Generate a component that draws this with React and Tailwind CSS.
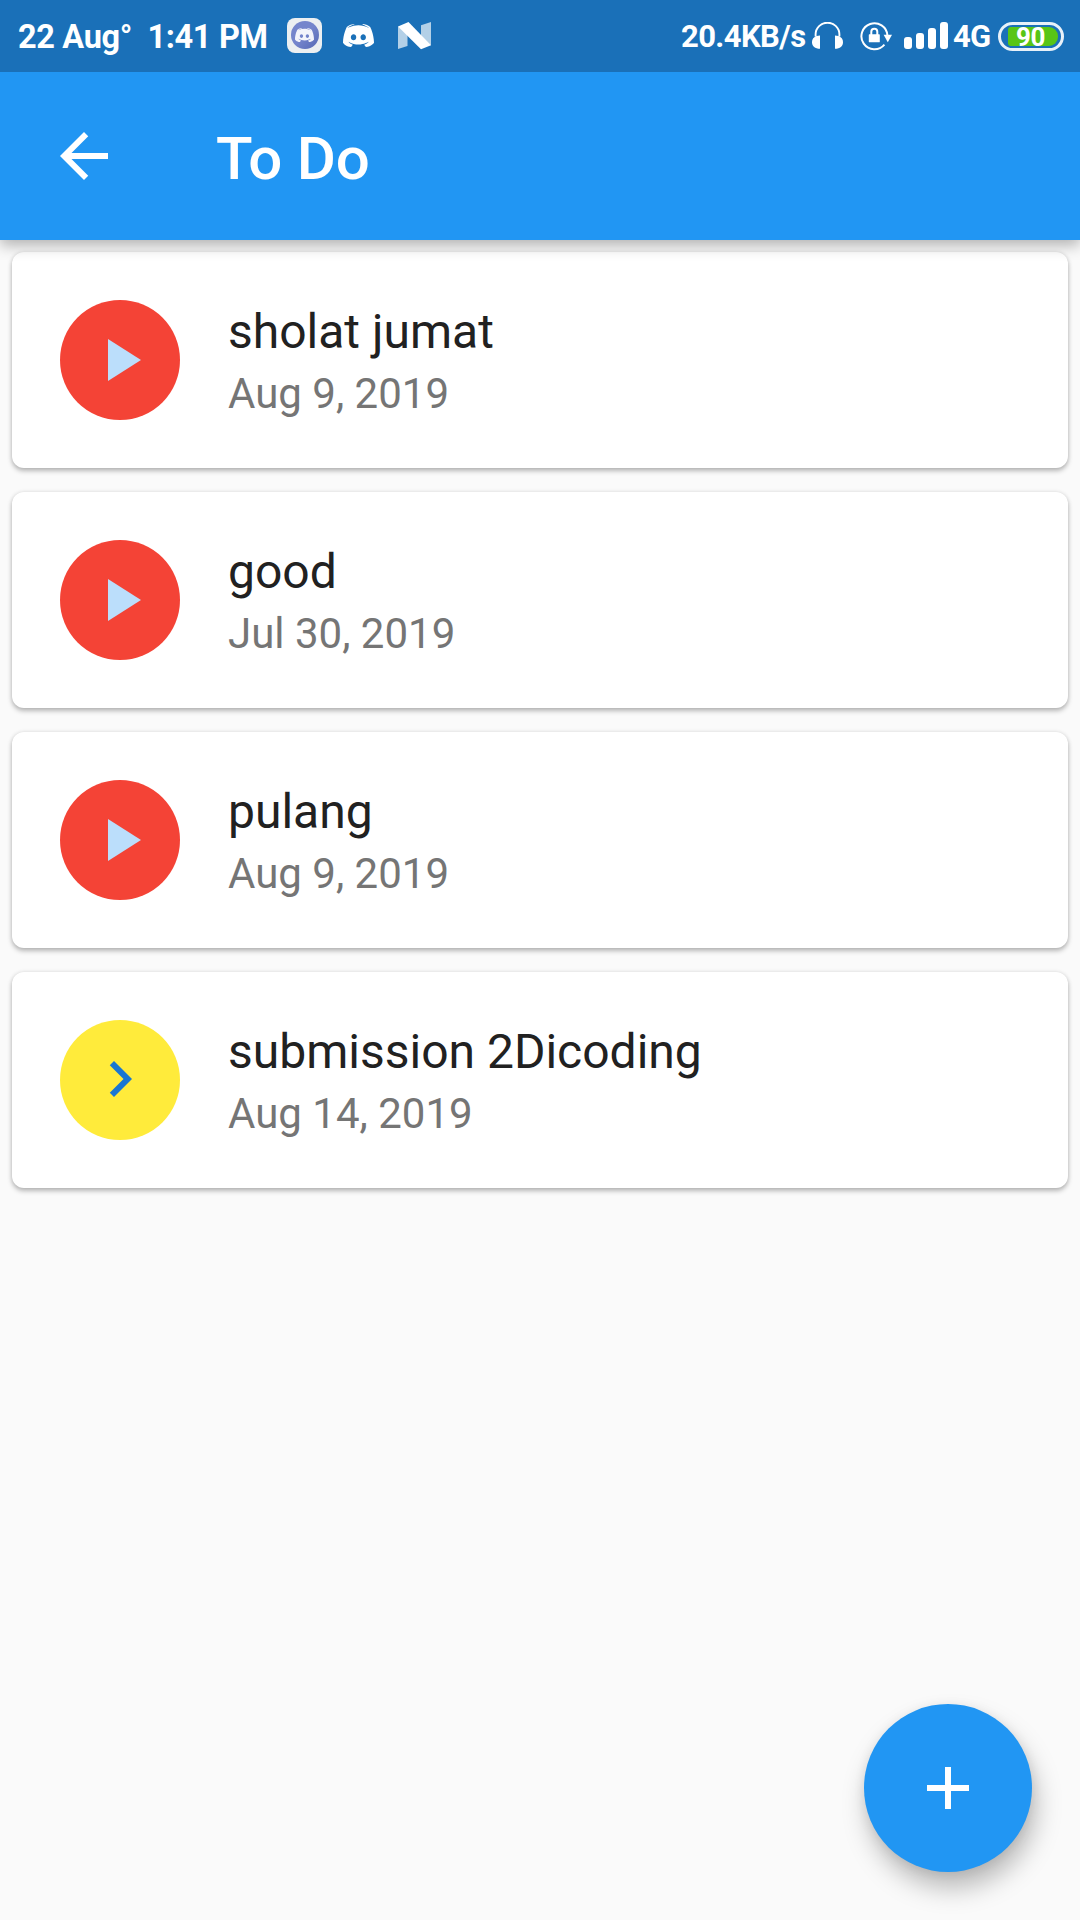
import React from 'react';

const TASKS = [
  { title: 'sholat jumat', date: 'Aug 9, 2019', state: 'todo' },
  { title: 'good', date: 'Jul 30, 2019', state: 'todo' },
  { title: 'pulang', date: 'Aug 9, 2019', state: 'todo' },
  { title: 'submission 2Dicoding', date: 'Aug 14, 2019', state: 'next' },
];

const DISCORD_MARK =
  'M297.216 243.2c0 15.616-11.52 28.416-26.112 28.416-14.336 0-26.112-12.8-26.112-28.416s11.52-28.416 26.112-28.416c14.592 0 26.112 12.8 26.112 28.416zm-119.552-28.416c-14.592 0-26.112 12.8-26.112 28.416s11.776 28.416 26.112 28.416c14.592 0 26.112-12.8 26.112-28.416.256-15.616-11.52-28.416-26.112-28.416zM375.04 295.424c0-82.432-36.864-149.248-36.864-149.248-36.864-27.648-71.936-26.88-71.936-26.88l-3.584 4.096c43.52 13.312 63.744 32.512 63.744 32.512-60.811-33.329-132.244-33.335-191.232-7.424-9.472 4.352-15.104 7.424-15.104 7.424s21.248-20.224 67.328-33.536l-2.56-3.072s-35.072-.768-71.936 26.88c0 0-36.864 66.816-36.864 149.248 0 0 21.504 37.12 78.08 38.912 0 0 9.472-11.52 17.152-21.248-32.512-9.728-44.8-30.208-44.8-30.208 3.766 2.636 9.976 6.053 10.496 6.4 43.21 24.198 104.588 32.126 159.744 8.96 8.96-3.328 18.944-8.192 29.44-15.104 0 0-12.8 20.992-46.336 30.464 7.68 9.728 16.896 20.736 16.896 20.736 56.576-1.792 78.336-38.912 78.336-38.912z';

function DiscordMark({ className }) {
  return (
    <svg viewBox="76 119 299 216" className={className} fill="currentColor" fillRule="evenodd" preserveAspectRatio="none">
      <path d={DISCORD_MARK} />
    </svg>
  );
}

function MaterialIcon({ d, className }) {
  return (
    <svg viewBox="0 0 24 24" className={className} fill="currentColor">
      <path d={d} />
    </svg>
  );
}

function DiscordAppIcon() {
  return (
    <div className="mb-[2px] flex h-[35px] w-[35px] items-center justify-center rounded-[8px] bg-[#eceff1]">
      <div className="flex h-[28px] w-[28px] items-center justify-center rounded-full bg-linear-to-br from-[#7585cc] from-50% to-[#5568b4]">
        <DiscordMark className="h-[14px] w-[19px] text-[#f3f4fb]" />
      </div>
    </div>
  );
}

function NougatIcon() {
  return (
    <svg viewBox="0 0 33 28" className="h-[28px] w-[33px]">
      <path d="M0 4.5 9.5 9v15L0 27z" fill="#b3d0e7" />
      <path d="M23 3.3 33 0v23.5L23 17z" fill="#b3d0e7" />
      <path d="M0 4.5 10.5 0 33 23.3 23 27.3z" fill="#fff" />
    </svg>
  );
}

function Headphones() {
  return (
    <svg viewBox="0 0 31 27" className="mb-[2px] h-[27px] w-[31px]">
      <path d="M3.6 14.5V12.3a11.9 11.6 0 0 1 23.8 0v2.2" fill="none" stroke="#fff" strokeWidth="1.9" />
      <path d="M8 13.6v13.2C3 26.8 0 24 0 20.2s3-6.6 8-6.6z" fill="#fff" />
      <path d="M23 13.6v13.2c5 0 8-2.8 8-6.6s-3-6.6-8-6.6z" fill="#fff" />
    </svg>
  );
}

function RotationLock() {
  return (
    <svg viewBox="0 0 32 30" className="h-[30px] w-[32px]">
      <path d="M24.4 23.6A13 13 0 1 1 27.4 14.4" fill="none" stroke="#fff" strokeWidth="2" />
      <path d="M23.6 13.8h8.4l-4.2 7.4z" fill="#fff" />
      <path d="M11.3 14v-3.2a3 3 0 0 1 6 0v3.2" fill="none" stroke="#fff" strokeWidth="2" />
      <rect x="8.8" y="13.3" width="11" height="8" rx="0.6" fill="#fff" />
    </svg>
  );
}

function Signal() {
  return (
    <div className="mb-[2px] flex h-[27px] items-end gap-1">
      <div className="h-[12px] w-2 rounded-[3px] bg-white" />
      <div className="h-[16px] w-2 rounded-[3px] bg-white" />
      <div className="h-[21px] w-2 rounded-[3px] bg-white" />
      <div className="h-[27px] w-2 rounded-[3px] bg-white" />
    </div>
  );
}

function Battery() {
  return (
    <div className="h-[29px] w-[66px] rounded-full border-[3px] border-[#e8f1f9] py-[2px] pl-[7px] pr-[3px]">
      <div className="flex h-[19px] items-center justify-center rounded-l-[3px] rounded-r-[9px] bg-[#58c516]">
        <span className="pt-[2px] pr-[5px] text-[26px] leading-none font-bold tracking-[-0.5px]">90</span>
      </div>
    </div>
  );
}

function StatusBar() {
  return (
    <div className="flex h-[72px] items-center justify-between bg-[#1a70b8] pr-4 pl-[18px] font-bold whitespace-pre text-white">
      <div className="flex items-center">
        <span className="w-[269px] pt-[1px] text-[32.5px] leading-[38px] tracking-[-0.35px]">22 Aug°  1:41 PM</span>
        <DiscordAppIcon />
        <DiscordMark className="mb-[2px] ml-[21px] h-[23px] w-[31px]" />
        <div className="ml-6">
          <NougatIcon />
        </div>
      </div>
      <div className="flex items-center">
        <span className="w-[131px] pt-[1px] text-[31px] leading-[36px] tracking-[-0.6px]">20.4KB/s</span>
        <Headphones />
        <div className="ml-[17px]">
          <RotationLock />
        </div>
        <div className="ml-3">
          <Signal />
        </div>
        <span className="ml-[5px] w-[45px] pt-[1px] text-[31px] leading-[36px] tracking-[-0.8px]">4G</span>
        <Battery />
      </div>
    </div>
  );
}

function TaskCard({ title, date, state }) {
  return (
    <li className="flex h-[216px] items-center rounded-[12px] bg-white pl-12 shadow-[0_3px_5px_rgba(0,0,0,0.26),0_0_4px_rgba(0,0,0,0.1)]">
      {state === 'todo' ? (
        <div className="flex h-[120px] w-[120px] items-center justify-center rounded-full bg-[#f44336] text-[#bbdefb]">
          <MaterialIcon className="h-[72px] w-[72px]" d="M8 5v14l11-7z" />
        </div>
      ) : (
        <div className="flex h-[120px] w-[120px] items-center justify-center rounded-full bg-[#ffeb3b] text-[#1976d2]">
          <MaterialIcon className="mb-[2px] h-[72px] w-[72px]" d="M10 6L8.59 7.41 13.17 12l-4.58 4.59L10 18l6-6z" />
        </div>
      )}
      <div className="ml-12 pt-[5px]">
        <h2 className="text-[48px] leading-[62px] text-[#212121]">{title}</h2>
        <p className="mt-[1px] text-[42px] leading-[60px] text-[#757575]">{date}</p>
      </div>
    </li>
  );
}

export default function App() {
  return (
    <div className="relative flex h-[1920px] w-[1080px] flex-col overflow-hidden bg-[#fafafa] font-[Roboto,sans-serif]">
      <header className="relative z-10 shadow-[0_5px_14px_rgba(0,0,0,0.3)]">
        <StatusBar />
        <div className="flex h-[168px] items-center bg-[#2196f3] pl-12 text-white">
          <MaterialIcon className="h-[72px] w-[72px]" d="M20 11H7.83l5.59-5.59L12 4l-8 8 8 8 1.41-1.41L7.83 13H20v-2z" />
          <h1 className="ml-24 pt-[6px] text-[60px] leading-[70px] font-medium tracking-[-0.2px]">To Do</h1>
        </div>
      </header>
      <ul className="flex flex-col gap-6 p-3">
        {TASKS.map((task) => (
          <TaskCard key={task.title} {...task} />
        ))}
      </ul>
      <button className="absolute right-12 bottom-12 flex h-[168px] w-[168px] items-center justify-center rounded-full bg-[#2196f3] text-white shadow-[4px_16px_26px_rgba(0,0,0,0.26),0_2px_12px_rgba(0,0,0,0.08)]">
        <MaterialIcon className="h-[72px] w-[72px]" d="M19 13h-6v6h-2v-6H5v-2h6V5h2v6h6v2z" />
      </button>
    </div>
  );
}
